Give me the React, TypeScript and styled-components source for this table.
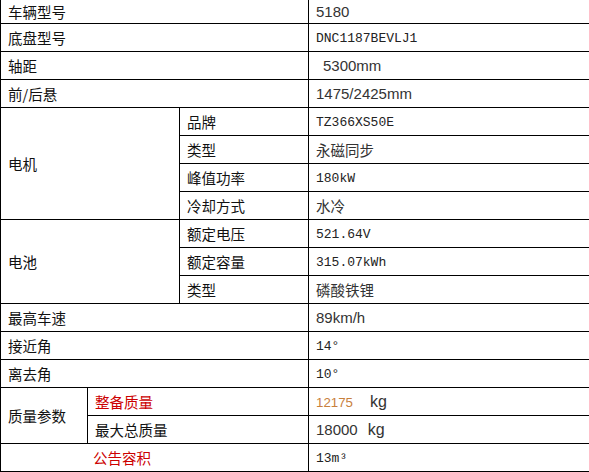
import styled, { createGlobalStyle } from 'styled-components';

const GlobalStyle = createGlobalStyle`
	html, body {
		margin: 0;
		padding: 0;
		background: #fff;
	}
	body {
		font-family: "Liberation Sans", "Noto Sans CJK SC", sans-serif;
		overflow: hidden;
	}
`;

const Table = styled.table`
	width: 589px;
	margin-top: -1px;
	border-collapse: collapse;
	table-layout: fixed;
`;

const Row = styled.tr<{ $first?: boolean }>`
	height: ${(p) => (p.$first ? '24px' : '28px')};
`;

const Cell = styled.td<{ $indent?: number; $red?: boolean }>`
	border: 1px solid #000;
	padding: 0 0 0 ${(p) => 7 + (p.$indent ?? 0)}px;
	font-family: "Noto Sans CJK SC", "Liberation Sans", sans-serif;
	font-size: 14.5px;
	line-height: 20px;
	color: ${(p) => (p.$red ? '#cc0000' : '#111')};
	vertical-align: middle;
	white-space: nowrap;
	overflow: hidden;
`;

const Value = styled.td<{ $indent?: number }>`
	border: 1px solid #000;
	padding: 0 0 0 ${(p) => 7 + (p.$indent ?? 0)}px;
	font-family: "Noto Sans CJK SC", "Liberation Sans", sans-serif;
	font-size: 14.5px;
	line-height: 20px;
	color: #333;
	vertical-align: middle;
	white-space: nowrap;
	overflow: hidden;
`;

const Sans = styled.span<{ $size?: number }>`
	font-family: "Liberation Sans", sans-serif;
	font-size: ${(p) => p.$size ?? 15}px;
	color: #333;
`;

const Mono = styled.span`
	font-family: "Liberation Mono", monospace;
	font-size: 13px;
	color: #222;
`;

const Orange = styled(Sans)`
	color: #c8803c;
	font-size: 13.3px;
`;

const Gap = styled.span<{ $w: number }>`
	display: inline-block;
	width: ${(p) => p.$w}px;
`;

function App() {
	return (
		<>
			<GlobalStyle />
			<Table>
				<colgroup>
					<col style={{ width: 87 }} />
					<col style={{ width: 92 }} />
					<col style={{ width: 129 }} />
					<col style={{ width: 281 }} />
				</colgroup>
				<tbody>
					<Row $first>
						<Cell colSpan={3}>车辆型号</Cell>
						<Value><Sans>5180</Sans></Value>
					</Row>
					<Row>
						<Cell colSpan={3}>底盘型号</Cell>
						<Value><Mono>DNC1187BEVLJ1</Mono></Value>
					</Row>
					<Row>
						<Cell colSpan={3}>轴距</Cell>
						<Value $indent={7}><Sans>5300mm</Sans></Value>
					</Row>
					<Row>
						<Cell colSpan={3}>前/后悬</Cell>
						<Value><Sans>1475/2425mm</Sans></Value>
					</Row>
					<Row>
						<Cell colSpan={2} rowSpan={4}>电机</Cell>
						<Cell>品牌</Cell>
						<Value><Mono>TZ366XS50E</Mono></Value>
					</Row>
					<Row>
						<Cell>类型</Cell>
						<Value>永磁同步</Value>
					</Row>
					<Row>
						<Cell>峰值功率</Cell>
						<Value><Mono>180kW</Mono></Value>
					</Row>
					<Row>
						<Cell>冷却方式</Cell>
						<Value>水冷</Value>
					</Row>
					<Row>
						<Cell colSpan={2} rowSpan={3}>电池</Cell>
						<Cell>额定电压</Cell>
						<Value><Mono>521.64V</Mono></Value>
					</Row>
					<Row>
						<Cell>额定容量</Cell>
						<Value><Mono>315.07kWh</Mono></Value>
					</Row>
					<Row>
						<Cell>类型</Cell>
						<Value>磷酸铁锂</Value>
					</Row>
					<Row>
						<Cell colSpan={3}>最高车速</Cell>
						<Value><Sans>89km/h</Sans></Value>
					</Row>
					<Row>
						<Cell colSpan={3}>接近角</Cell>
						<Value><Mono>14°</Mono></Value>
					</Row>
					<Row>
						<Cell colSpan={3}>离去角</Cell>
						<Value><Mono>10°</Mono></Value>
					</Row>
					<Row>
						<Cell rowSpan={2}>质量参数</Cell>
						<Cell colSpan={2} $red>整备质量</Cell>
						<Value>
							<Orange>12175</Orange>
							<Gap $w={17} />
							<Sans $size={16}>kg</Sans>
						</Value>
					</Row>
					<Row>
						<Cell colSpan={2}>最大总质量</Cell>
						<Value>
							<Sans>18000</Sans>
							<Gap $w={10} />
							<Sans $size={16}>kg</Sans>
						</Value>
					</Row>
					<Row>
						<Cell colSpan={3} $red $indent={85}>公告容积</Cell>
						<Value><Mono>13m³</Mono></Value>
					</Row>
				</tbody>
			</Table>
		</>
	);
}

export default App;
